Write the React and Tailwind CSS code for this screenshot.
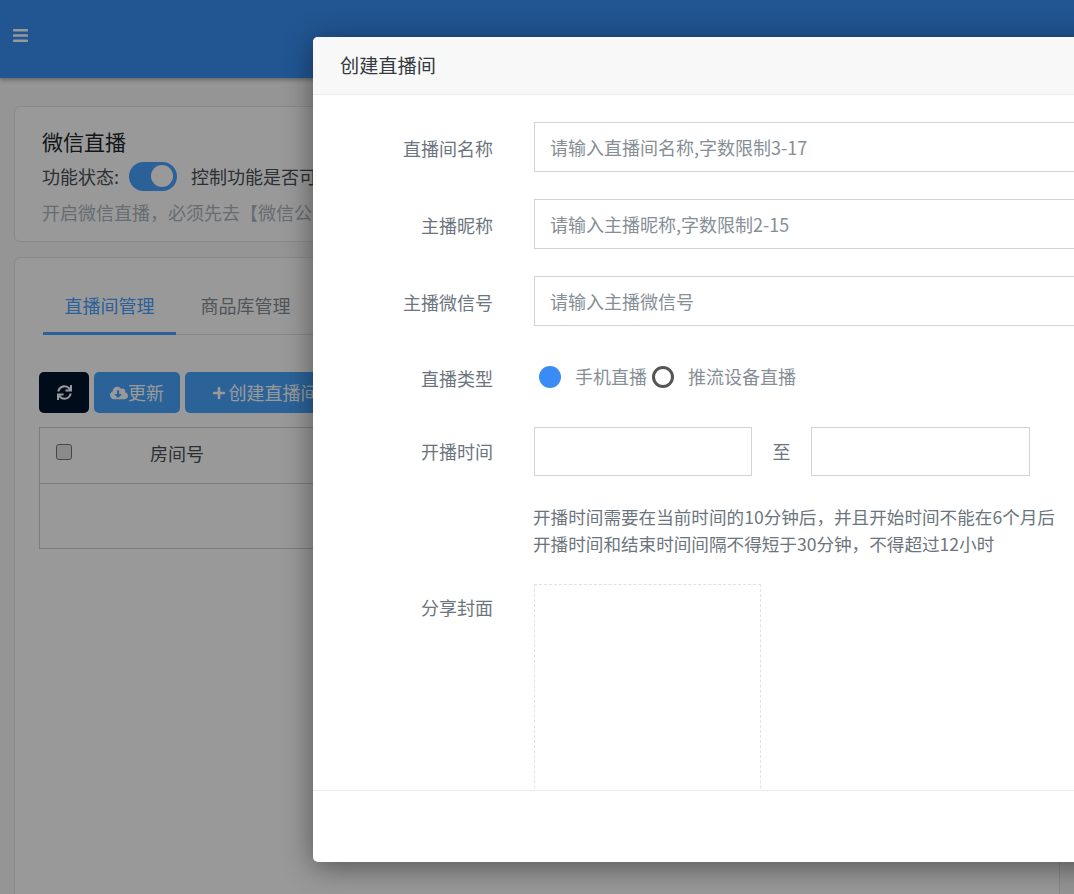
import React from "react";
import { FaBars, FaCloudDownloadAlt, FaPlus, FaSync } from "react-icons/fa";

const font = { fontFamily: '"Noto Sans CJK SC", sans-serif' };

function Field({ label, placeholder }) {
  return (
    <div className="flex mb-[27px]">
      <label className="w-[180px] pr-0 shrink-0 text-right text-[18px] leading-[50px] text-[#6c757d] h-[50px] pt-[1px]">
        {label}
      </label>
      <input
        readOnly
        placeholder={placeholder}
        className="ml-[41px] w-[620px] h-[50px] px-[15px] border border-[#ced4da] text-[18px] placeholder:text-[#868e96] outline-none"
      />
    </div>
  );
}

export default function App() {
  return (
    <div
      className="relative h-[894px] overflow-hidden bg-[#f9f9f9] font-['Inter','Noto_Sans_CJK_SC',sans-serif] text-[18px]"
      style={font}
    >
      {/* page behind the dialog */}
      <header className="h-[78px] flex items-center px-[12px] pb-[7px] bg-[#378ff6] shadow-[0_2px_4px_rgba(0,0,0,0.3)] text-white">
        <FaBars className="text-[17px]" />
      </header>

      <div className="mx-[14px] mt-[28px] h-[136px] bg-white border border-[#e4e4e4] rounded-[6px] px-[27px] pt-[18px] whitespace-nowrap">
        <h2 className="text-[21px] leading-[32px] text-[#212529]">微信直播</h2>
        <div className="flex items-center h-[38px] text-[#495057]">
          <span>功能状态:</span>
          <span className="ml-[10px] w-[48px] h-[29px] rounded-full bg-[#48a0ff] flex items-center justify-end pr-[4px]">
            <span className="w-[22px] h-[22px] rounded-full bg-white" />
          </span>
          <span className="ml-[14px]">控制功能是否可用</span>
        </div>
        <p className="leading-[34px] text-[#adb5bd]">开启微信直播，必须先去【微信公众平台】开通</p>
      </div>

      <div className="mx-[14px] mt-[15px] h-[700px] bg-white border border-[#e4e4e4] rounded-[6px] px-[24px] pt-[21px] whitespace-nowrap">
        <div className="flex mx-[4px] h-[56px] border-b border-[#dee2e6]">
          <span className="w-[133px] h-[56px] text-center leading-[52px] text-[#48a0ff] border-b-[3px] border-[#48a0ff]">
            直播间管理
          </span>
          <span className="w-[139px] text-center leading-[52px] text-[#868e96]">商品库管理</span>
        </div>

        <div className="flex gap-[5px] mt-[37px] h-[41px]">
          <button className="w-[50px] rounded-[5px] bg-[#02152e] text-white flex items-center justify-center">
            <FaSync className="text-[15px]" />
          </button>
          <button className="w-[86px] rounded-[5px] bg-[#48a5ff] text-white flex items-center justify-center">
            <FaCloudDownloadAlt className="text-[18px]" />
            更新
          </button>
          <button className="w-[160px] rounded-[5px] bg-[#48a5ff] text-white flex items-center justify-center gap-[3px]">
            <FaPlus className="text-[14px]" />
            创建直播间
          </button>
        </div>

        <div className="mt-[14px] h-[122px] border border-[#cfcfcf]">
          <div className="flex h-[56px] border-b border-[#cfcfcf]">
            <span className="ml-[16px] mt-[16px] w-[16px] h-[16px] rounded-[3px] border border-[#767676] bg-[#e8e8e8]" />
            <span className="ml-[78px] mt-[12px] text-[#495057]">房间号</span>
          </div>
        </div>
      </div>

      {/* overlay */}
      <div className="absolute inset-0 bg-black/40" />

      {/* dialog */}
      <div className="absolute left-[313px] top-[37px] w-[900px] h-[825px] flex flex-col bg-white rounded-[5px] shadow-[0_5px_30px_rgba(0,0,0,0.45)]">
        <div className="h-[58px] shrink-0 px-[27px] flex items-center bg-[#f8f8f8] border-b border-[#ececec] rounded-t-[5px] text-[19.2px] text-[#343a40]">
          创建直播间
        </div>

        <div className="flex-1 overflow-hidden pt-[27px]">
          <Field label="直播间名称" placeholder="请输入直播间名称,字数限制3-17" />
          <Field label="主播昵称" placeholder="请输入主播昵称,字数限制2-15" />
          <Field label="主播微信号" placeholder="请输入主播微信号" />

          <div className="flex items-center h-[50px] -mt-[1px]">
            <label className="w-[180px] shrink-0 text-right text-[#6c757d] pt-[3px]">直播类型</label>
            <span className="ml-[46px] w-[22px] h-[22px] rounded-full bg-[#3b8bf6]" />
            <span className="ml-[14px] text-[#868e96] -mt-[2px]">手机直播</span>
            <span className="ml-[5px] w-[22px] h-[22px] rounded-full border-[3px] border-[#555]" />
            <span className="ml-[14px] text-[#868e96] -mt-[2px]">推流设备直播</span>
          </div>

          <div className="flex items-center mt-[25px] h-[49px]">
            <label className="w-[180px] shrink-0 text-right text-[#6c757d]">开播时间</label>
            <input readOnly className="ml-[41px] w-[218px] h-[49px] border border-[#ced4da] outline-none" />
            <span className="w-[59px] text-center text-[#6c757d]">至</span>
            <input readOnly className="w-[219px] h-[49px] border border-[#ced4da] outline-none" />
          </div>

          <p className="ml-[220px] mt-[27px] text-[17.6px] leading-[27px] text-[#6c757d] whitespace-nowrap">
            开播时间需要在当前时间的10分钟后，并且开始时间不能在6个月后
            <br />
            开播时间和结束时间间隔不得短于30分钟，不得超过12小时
          </p>

          <div className="flex mt-[27px]">
            <label className="w-[180px] shrink-0 text-right text-[#6c757d] pt-[10px]">分享封面</label>
            <div className="ml-[41px] w-[227px] h-[300px] border border-dashed border-[#dee2e6]" />
          </div>
        </div>

        <div className="h-[72px] shrink-0 border-t border-[#e9ecef]" />
      </div>
    </div>
  );
}
